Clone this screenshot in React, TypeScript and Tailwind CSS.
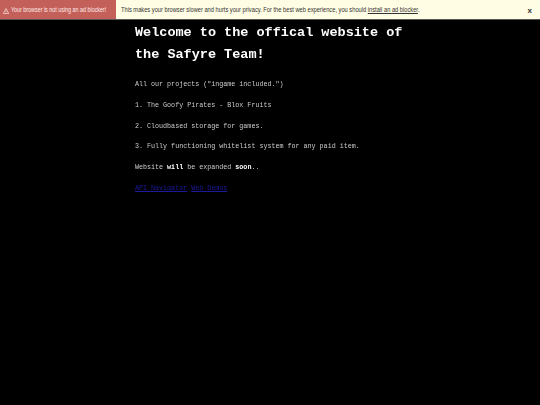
import React from "react";

const mono = { fontFamily: '"Liberation Mono", "Courier New", monospace' };

function Banner() {
  return (
    <div
      className="flex h-[20px] items-stretch whitespace-nowrap border-b border-[#555] bg-[#fffde3] text-[6.8px] leading-none"
      style={{ fontFamily: '"Liberation Sans", Arial, sans-serif' }}
    >
      <div className="flex w-[116px] items-center gap-[2px] bg-[#c4605a] pl-[3px] pt-[2px] text-[#fdebe7]">
        <svg width="6" height="6" viewBox="0 0 12 12" className="shrink-0">
          <path d="M6 1 L11.5 11 H0.5 Z" fill="none" stroke="#fdebe7" strokeWidth="1.3" strokeLinejoin="round" />
          <path d="M6 4.5 V8" stroke="#fdebe7" strokeWidth="1.3" />
          <circle cx="6" cy="9.6" r="0.7" fill="#fdebe7" />
        </svg>
        <span className="inline-block origin-left scale-x-[0.79]">Your browser is not using an ad blocker!</span>
      </div>
      <div className="flex flex-1 items-center justify-between pl-[5px] pr-[8px] pt-[2px] text-[#333]">
        <span className="inline-block origin-left scale-x-[0.84]">
          This makes your browser slower and hurts your privacy. For the best web experience, you should{" "}
          <a className="underline">install an ad blocker</a>.
        </span>
        <span className="text-[8px] font-bold text-[#333]">x</span>
      </div>
    </div>
  );
}

export default function App() {
  return (
    <div className="min-h-[405px] w-full bg-black" style={mono}>
      <Banner />
      <div className="mx-auto w-[270px] pt-[2px] will-change-transform">
        <h1 className="text-[13.5px] font-bold leading-[22px] text-white">
          Welcome to the offical website of the Safyre Team!
        </h1>
        <div className="mt-[15px] flex flex-col gap-[13.3px] text-[6.7px] leading-[7.5px] text-[#cccccc]">
          <p>All our projects ("ingame included.")</p>
          <p>1. The Goofy Pirates - Blox Fruits</p>
          <p>2. Cloudbased storage for games.</p>
          <p>3. Fully functioning whitelist system for any paid item.</p>
          <p>
            Website <b className="text-white">will</b> be expanded <b className="text-white">soon</b>..
          </p>
          <p className="text-[#1a1a9a]">
            <a className="underline">API Navigator</a> <a className="underline">Web Demos</a>
          </p>
        </div>
      </div>
    </div>
  );
}
